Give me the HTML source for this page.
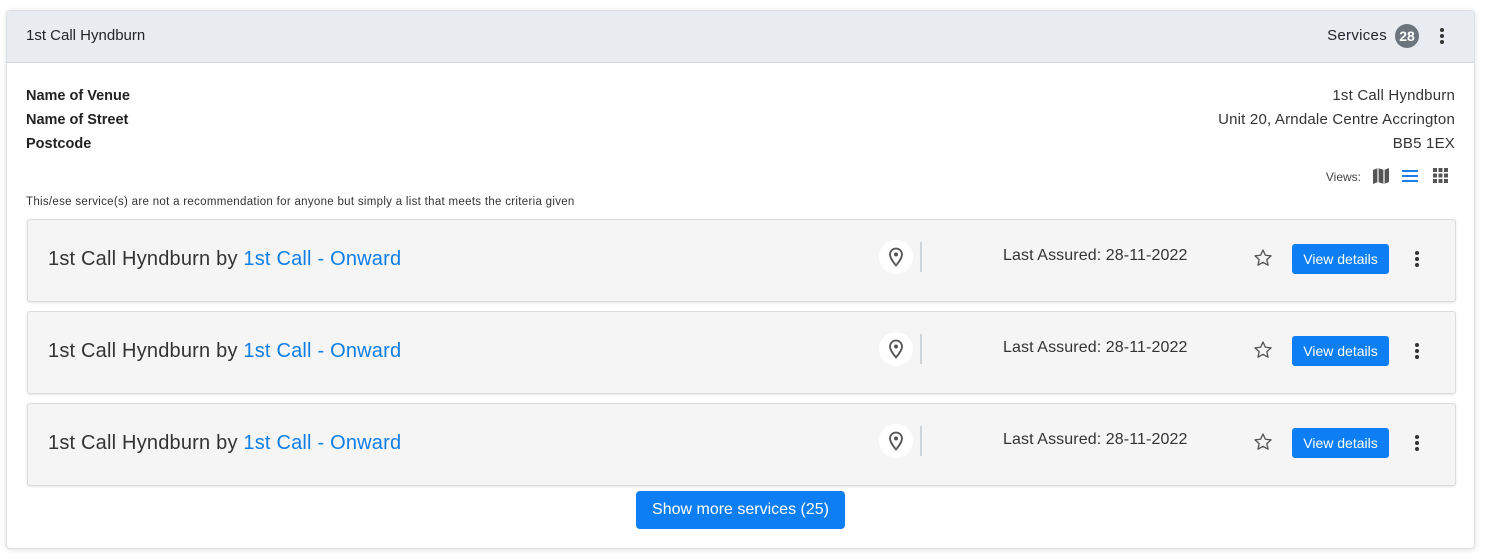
<!DOCTYPE html>
<html><head><style>
*{box-sizing:border-box;margin:0;padding:0}
body{width:1488px;height:559px;background:#fff;font-family:"Liberation Sans",sans-serif;color:#212529;position:relative;overflow:hidden}
.card{position:absolute;left:6px;top:10px;width:1469px;height:539px;border:1px solid #dde1e5;border-radius:4px;box-shadow:0 1px 6px rgba(0,0,0,.12);background:#fff}
.hd{height:52px;background:#e9edf2;border-bottom:1px solid #d3d8de;position:relative}
.hd .t{position:absolute;left:19px;top:16px;font-size:15px}
.svc{position:absolute;top:16px;font-size:15px;letter-spacing:.3px}
.badge{position:absolute;top:13px;width:24px;height:24px;border-radius:50%;background:#6c757d;color:#fff;font-size:14px;font-weight:bold;text-align:center;line-height:24px}
.kv{position:absolute;font-size:15px}
.row{position:absolute;left:20px;width:1429px;height:83px;background:#f5f5f5;border:1px solid #dcdcdc;border-radius:3px;box-shadow:0 1px 2px rgba(0,0,0,.1)}
.row .n{position:absolute;left:20px;top:28px;font-size:20px;color:#333;letter-spacing:.2px}
.row .n span{color:#0d7ee8}
.pin{position:absolute;left:851px;top:20px;width:34px;height:34px;border-radius:50%;background:#fff}
.sep{position:absolute;left:892px;top:22px;width:2px;height:30px;background:#cfd4d9}
.la{position:absolute;left:975px;top:27px;font-size:16px;color:#333;letter-spacing:.1px}
.star{position:absolute;left:1225px;top:28px}
.vd{position:absolute;left:1264px;top:24px;width:97px;height:30px;background:#0d7ef3;border-radius:3px;color:#fff;font-size:14px;text-align:center;line-height:30px}
.dots{position:absolute;left:1386px;top:30px}
.more{position:absolute;left:629px;top:480px;width:209px;height:38px;background:#0d7ef3;border-radius:4px;color:#fff;font-size:16px;text-align:center;line-height:38px}
</style></head><body>
<div class="card">
<div class="hd"><div class="t">1st Call Hyndburn</div><div class="svc" style="right:87px">Services</div><div class="badge" style="right:55px">28</div>
<svg style="position:absolute;right:29px;top:16px" width="6" height="18"><circle cx="3" cy="3" r="2" fill="#333"/><circle cx="3" cy="9" r="2" fill="#333"/><circle cx="3" cy="15" r="2" fill="#333"/></svg></div>
<div class="kv" style="left:19px;top:73px;line-height:24px;font-weight:bold;font-size:14.5px;color:#222">Name of Venue<br>Name of Street<br>Postcode</div>
<div class="kv" style="right:19px;top:73px;line-height:24px;text-align:right;color:#333;letter-spacing:.2px">1st Call Hyndburn<br>Unit 20, Arndale Centre Accrington<br>BB5 1EX</div>
<div style="position:absolute;right:113px;top:159px;font-size:12px;color:#444">Views:</div>
<svg style="position:absolute;left:1365px;top:156px" width="18" height="18" viewBox="0 0 18 18"><path d="M1 3l5-2 6 2 5-2v14l-5 2-6-2-5 2z" fill="#555"/><path d="M6 1v14M12 3v14" stroke="#fff" stroke-width="1.2"/></svg>
<svg style="position:absolute;left:1394px;top:157px" width="18" height="16"><path d="M1 3h16M1 8h16M1 13h16" stroke="#1a7fe6" stroke-width="2"/></svg>
<svg style="position:absolute;left:1426px;top:157px" width="15" height="15"><g fill="#555"><rect x="0" y="0" width="4" height="4"/><rect x="5.5" y="0" width="4" height="4"/><rect x="11" y="0" width="4" height="4"/><rect x="0" y="5.5" width="4" height="4"/><rect x="5.5" y="5.5" width="4" height="4"/><rect x="11" y="5.5" width="4" height="4"/><rect x="0" y="11" width="4" height="4"/><rect x="5.5" y="11" width="4" height="4"/><rect x="11" y="11" width="4" height="4"/></g></svg>
<div style="position:absolute;left:19px;top:185px;font-size:11.5px;color:#333;letter-spacing:.3px">This/ese service(s) are not a recommendation for anyone but simply a list that meets the criteria given</div>

<div class="row" style="top:208px"><div class="n">1st Call Hyndburn by <span>1st Call - Onward</span></div><div class="pin"><svg style="position:absolute;left:9px;top:7px" width="16" height="20" viewBox="0 0 16 20"><path d="M8 18.5C4 13.5 2 10.5 2 7.5a6 6 0 0112 0c0 3-2 6-6 11z" fill="none" stroke="#555" stroke-width="1.8"/><circle cx="8" cy="7.5" r="2" fill="#555"/></svg></div><div class="sep"></div><div class="la">Last Assured: 28-11-2022</div><svg class="star" width="20" height="20" viewBox="0 0 24 24"><path d="M12 2.5l2.9 6.2 6.7.7-5 4.6 1.4 6.6L12 17.2l-6 3.4 1.4-6.6-5-4.6 6.7-.7z" fill="none" stroke="#555" stroke-width="1.6" stroke-linejoin="round"/></svg><div class="vd">View details</div><svg class="dots" width="6" height="18"><circle cx="3" cy="3" r="2" fill="#333"/><circle cx="3" cy="9" r="2" fill="#333"/><circle cx="3" cy="15" r="2" fill="#333"/></svg></div>

<div class="row" style="top:300px"><div class="n">1st Call Hyndburn by <span>1st Call - Onward</span></div><div class="pin"><svg style="position:absolute;left:9px;top:7px" width="16" height="20" viewBox="0 0 16 20"><path d="M8 18.5C4 13.5 2 10.5 2 7.5a6 6 0 0112 0c0 3-2 6-6 11z" fill="none" stroke="#555" stroke-width="1.8"/><circle cx="8" cy="7.5" r="2" fill="#555"/></svg></div><div class="sep"></div><div class="la">Last Assured: 28-11-2022</div><svg class="star" width="20" height="20" viewBox="0 0 24 24"><path d="M12 2.5l2.9 6.2 6.7.7-5 4.6 1.4 6.6L12 17.2l-6 3.4 1.4-6.6-5-4.6 6.7-.7z" fill="none" stroke="#555" stroke-width="1.6" stroke-linejoin="round"/></svg><div class="vd">View details</div><svg class="dots" width="6" height="18"><circle cx="3" cy="3" r="2" fill="#333"/><circle cx="3" cy="9" r="2" fill="#333"/><circle cx="3" cy="15" r="2" fill="#333"/></svg></div>

<div class="row" style="top:392px"><div class="n">1st Call Hyndburn by <span>1st Call - Onward</span></div><div class="pin"><svg style="position:absolute;left:9px;top:7px" width="16" height="20" viewBox="0 0 16 20"><path d="M8 18.5C4 13.5 2 10.5 2 7.5a6 6 0 0112 0c0 3-2 6-6 11z" fill="none" stroke="#555" stroke-width="1.8"/><circle cx="8" cy="7.5" r="2" fill="#555"/></svg></div><div class="sep"></div><div class="la">Last Assured: 28-11-2022</div><svg class="star" width="20" height="20" viewBox="0 0 24 24"><path d="M12 2.5l2.9 6.2 6.7.7-5 4.6 1.4 6.6L12 17.2l-6 3.4 1.4-6.6-5-4.6 6.7-.7z" fill="none" stroke="#555" stroke-width="1.6" stroke-linejoin="round"/></svg><div class="vd">View details</div><svg class="dots" width="6" height="18"><circle cx="3" cy="3" r="2" fill="#333"/><circle cx="3" cy="9" r="2" fill="#333"/><circle cx="3" cy="15" r="2" fill="#333"/></svg></div>

<div class="more">Show more services (25)</div>
</div>
</body></html>
